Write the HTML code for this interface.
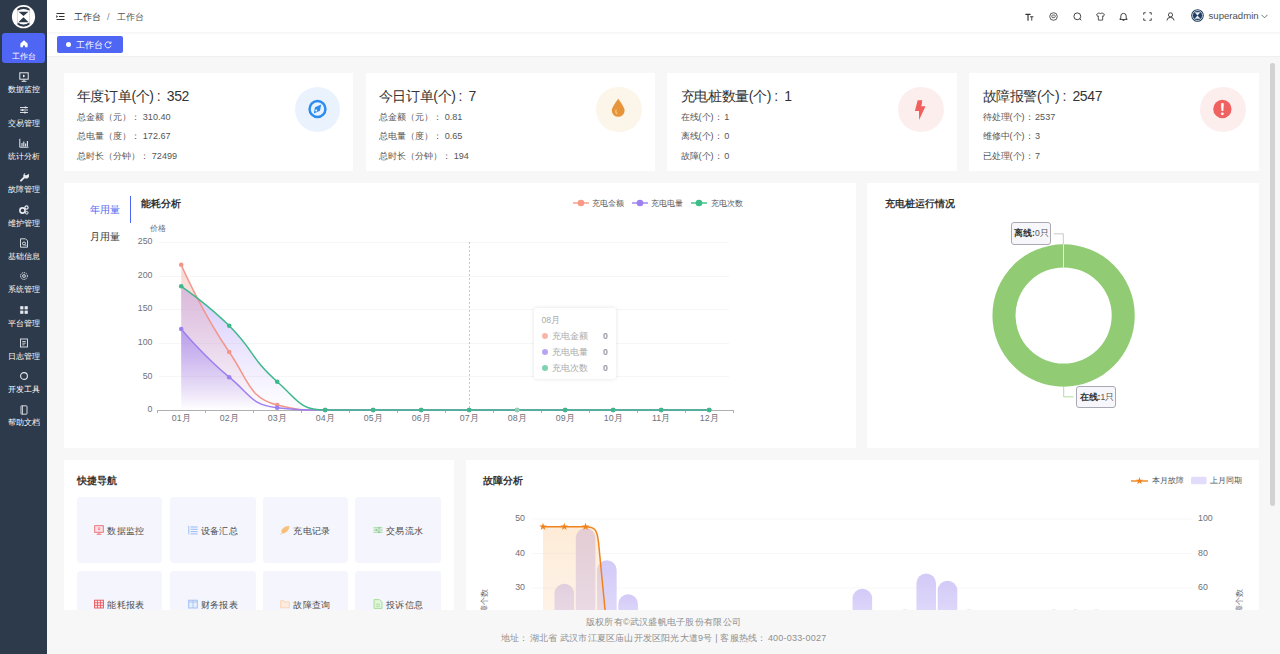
<!DOCTYPE html>
<html><head><meta charset="utf-8">
<style>
*{box-sizing:border-box}
html,body{margin:0;padding:0;width:1280px;height:654px;overflow:hidden;background:#f7f7f7;font-family:"Liberation Sans",sans-serif;color:#333}
.abs{position:absolute}
#side{position:absolute;left:0;top:0;width:47px;height:654px;background:#2d3a4b}
.mi{position:absolute;left:0;width:47px;height:30px;color:#e6e9ee;font-size:8.4px;line-height:10px}
.mi svg{position:absolute;left:18.5px;width:10px;height:10px}
.mi .tx{position:absolute;left:0;width:47px;text-align:center;white-space:nowrap}
.act{position:absolute;left:2px;top:33px;width:43px;height:30px;background:#4f66f5;border-radius:3px}
#hdr{position:absolute;left:47px;top:0;width:1233px;height:32px;background:#fff}
#tags{position:absolute;left:47px;top:33px;width:1233px;height:23px;background:#fff;border-top:1px solid #f9f9f9;box-shadow:0 1px 1px rgba(0,0,0,0.03)}
.card{position:absolute;background:#fff}
.t14{position:absolute;font-size:14px;letter-spacing:-0.35px;line-height:16px;color:#333;white-space:nowrap}
.t9{position:absolute;font-size:9.1px;line-height:10px;color:#555;white-space:nowrap}
.circ{position:absolute;width:45.4px;height:45.4px;border-radius:50%}
.circ svg{position:absolute;left:0;top:0;width:45.4px;height:45.4px}
.tile{position:absolute;width:85.6px;height:66.6px;background:#f4f5fd;border-radius:4px}
.tile .tt{position:absolute;top:28px;left:0;width:85.6px;text-align:center;font-size:9.4px;line-height:11px;color:#4a4a4a;white-space:nowrap;letter-spacing:0.3px}
.tile svg{display:inline-block;width:10px;height:10px;vertical-align:-1px;margin-right:3px}
.ttl{position:absolute;font-size:9.8px;line-height:11px;font-weight:bold;color:#333;white-space:nowrap}
.lg{position:absolute;font-size:7.6px;line-height:9px;color:#555;white-space:nowrap}
.ax{position:absolute;font-size:8.8px;line-height:10px;color:#6e7079;white-space:nowrap}
.hic{position:absolute;top:12px;width:10px;height:10px}
.ft{position:absolute;left:47px;width:1233px;text-align:center;font-size:9px;line-height:10px;color:#8f8f8f;white-space:nowrap}
</style></head><body>
<!-- sidebar -->
<div id="side">
  <svg class="abs" style="left:10px;top:3px" width="27" height="27" viewBox="0 0 27 27">
    <defs><clipPath id="lgc"><rect x="7.2" y="0" width="12.6" height="27"/></clipPath></defs>
    <circle cx="13.5" cy="13.7" r="11.6" fill="#fff"/>
    <circle cx="13.5" cy="13.7" r="8.9" fill="none" stroke="#2d3a4b" stroke-width="2.3" clip-path="url(#lgc)"/>
    <rect x="7.2" y="7.3" width="12.6" height="12.8" fill="#fff"/>
    <path d="M7.4 6.5V21M19.6 6.5V21" stroke="#b8bcc4" stroke-width="0.6"/>
    <path d="M8.6 8.8H18.4L13.5 13.1Z M13.5 14.3L18.7 19.2H8.3Z" fill="#2d3a4b"/>
  </svg>
  <div class="act"></div>
  <svg class="abs" style="left:18.5px;top:38.3px" width="10" height="10" viewBox="0 0 10 10"><path d="M5 2.2L8.6 5.4V9.3H6.1V7.4H3.9V9.3H1.4V5.4Z" fill="#fff"/></svg>
<div class="abs" style="left:0;width:47px;top:51.1px;text-align:center;font-size:8.4px;line-height:11px;color:#fff;white-space:nowrap">工作台</div>
<svg class="abs" style="left:18.5px;top:71.6px" width="10" height="10" viewBox="0 0 10 10"><rect x="0.8" y="0.8" width="8.4" height="6.4" fill="none" stroke="#e6e9ee" stroke-width="1"/><path d="M4 2.6L6.4 4L4 5.4Z" fill="#e6e9ee"/><path d="M5 7.2V9.2M2.6 9.3H7.4" stroke="#e6e9ee" stroke-width="1"/></svg>
<div class="abs" style="left:0;width:47px;top:84.4px;text-align:center;font-size:8.4px;line-height:11px;color:#fff;white-space:nowrap">数据监控</div>
<svg class="abs" style="left:18.5px;top:104.9px" width="10" height="10" viewBox="0 0 10 10"><path d="M1 2.5H9M1 5H9M1 7.5H9" stroke="#e6e9ee" stroke-width="0.9"/><circle cx="6.5" cy="2.5" r="1.1" fill="#e6e9ee"/><circle cx="3.5" cy="5" r="1.1" fill="#e6e9ee"/><circle cx="6" cy="7.5" r="1.1" fill="#e6e9ee"/></svg>
<div class="abs" style="left:0;width:47px;top:117.7px;text-align:center;font-size:8.4px;line-height:11px;color:#fff;white-space:nowrap">交易管理</div>
<svg class="abs" style="left:18.5px;top:138.2px" width="10" height="10" viewBox="0 0 10 10"><path d="M0.8 0.8V9.2H9.5" fill="none" stroke="#e6e9ee" stroke-width="1"/><path d="M3 8.5V5M4.8 8.5V3.5M6.6 8.5V5.5M8.4 8.5V3" stroke="#e6e9ee" stroke-width="1.1"/></svg>
<div class="abs" style="left:0;width:47px;top:151.0px;text-align:center;font-size:8.4px;line-height:11px;color:#fff;white-space:nowrap">统计分析</div>
<svg class="abs" style="left:18.5px;top:171.5px" width="10" height="10" viewBox="0 0 10 10"><path d="M2 8.6L6.2 4.4" stroke="#e6e9ee" stroke-width="2" stroke-linecap="round"/><path d="M9.4 1.8A2.9 2.9 0 1 1 6.4 0.9L5.6 2.6L6.8 3.6L8.4 2.8Z" fill="#e6e9ee"/></svg>
<div class="abs" style="left:0;width:47px;top:184.3px;text-align:center;font-size:8.4px;line-height:11px;color:#fff;white-space:nowrap">故障管理</div>
<svg class="abs" style="left:18.5px;top:204.8px" width="10" height="10" viewBox="0 0 10 10"><circle cx="3.5" cy="5.5" r="2.6" fill="none" stroke="#e6e9ee" stroke-width="1.6"/><circle cx="7.5" cy="2.5" r="1.6" fill="none" stroke="#e6e9ee" stroke-width="1.2"/><circle cx="7.8" cy="7.8" r="1.3" fill="none" stroke="#e6e9ee" stroke-width="1"/></svg>
<div class="abs" style="left:0;width:47px;top:217.6px;text-align:center;font-size:8.4px;line-height:11px;color:#fff;white-space:nowrap">维护管理</div>
<svg class="abs" style="left:18.5px;top:238.1px" width="10" height="10" viewBox="0 0 10 10"><path d="M1.5 0.8H6.5L8.5 2.8V9.2H1.5Z" fill="none" stroke="#e6e9ee" stroke-width="0.9"/><circle cx="5" cy="5.5" r="1.5" fill="none" stroke="#e6e9ee" stroke-width="0.9"/><path d="M6 6.6L7.6 8.2" stroke="#e6e9ee" stroke-width="0.9"/></svg>
<div class="abs" style="left:0;width:47px;top:250.9px;text-align:center;font-size:8.4px;line-height:11px;color:#fff;white-space:nowrap">基础信息</div>
<svg class="abs" style="left:18.5px;top:271.4px" width="10" height="10" viewBox="0 0 10 10"><circle cx="5" cy="5" r="3.4" fill="none" stroke="#e6e9ee" stroke-width="1" stroke-dasharray="1.4,0.8"/><circle cx="5" cy="5" r="1.4" fill="none" stroke="#e6e9ee" stroke-width="0.9"/></svg>
<div class="abs" style="left:0;width:47px;top:284.2px;text-align:center;font-size:8.4px;line-height:11px;color:#fff;white-space:nowrap">系统管理</div>
<svg class="abs" style="left:18.5px;top:304.7px" width="10" height="10" viewBox="0 0 10 10"><rect x="1.2" y="1.2" width="3.2" height="3.2" fill="#e6e9ee"/><rect x="5.6" y="1.2" width="3.2" height="3.2" fill="#e6e9ee"/><rect x="1.2" y="5.6" width="3.2" height="3.2" fill="#e6e9ee"/><rect x="5.6" y="5.6" width="3.2" height="3.2" fill="#e6e9ee"/></svg>
<div class="abs" style="left:0;width:47px;top:317.5px;text-align:center;font-size:8.4px;line-height:11px;color:#fff;white-space:nowrap">平台管理</div>
<svg class="abs" style="left:18.5px;top:338.0px" width="10" height="10" viewBox="0 0 10 10"><rect x="1.5" y="1" width="7" height="8" fill="none" stroke="#e6e9ee" stroke-width="0.9"/><path d="M3.2 3.5H6.8M3.2 5.2H6.8M3.2 6.9H5.5" stroke="#e6e9ee" stroke-width="0.8"/></svg>
<div class="abs" style="left:0;width:47px;top:350.8px;text-align:center;font-size:8.4px;line-height:11px;color:#fff;white-space:nowrap">日志管理</div>
<svg class="abs" style="left:18.5px;top:371.3px" width="10" height="10" viewBox="0 0 10 10"><circle cx="5" cy="5" r="3.4" fill="none" stroke="#e6e9ee" stroke-width="1.1"/></svg>
<div class="abs" style="left:0;width:47px;top:384.1px;text-align:center;font-size:8.4px;line-height:11px;color:#fff;white-space:nowrap">开发工具</div>
<svg class="abs" style="left:18.5px;top:404.6px" width="10" height="10" viewBox="0 0 10 10"><rect x="2" y="0.8" width="6" height="8.4" rx="0.6" fill="none" stroke="#e6e9ee" stroke-width="0.9"/><path d="M3.5 0.8V9.2" stroke="#e6e9ee" stroke-width="0.8"/></svg>
<div class="abs" style="left:0;width:47px;top:417.4px;text-align:center;font-size:8.4px;line-height:11px;color:#fff;white-space:nowrap">帮助文档</div>
</div>
<!-- header -->
<div id="hdr">
  <svg class="abs" style="left:9.3px;top:12.2px" width="9" height="9" viewBox="0 0 9 9"><path d="M0.5 1.5H8.5M3 4.5H8.5M0.5 7.5H8.5" stroke="#303133" stroke-width="1.2"/><path d="M0.3 3L2 4.5L0.3 6Z" fill="#303133"/></svg>
  <div class="abs" style="left:27px;top:11.7px;font-size:9.3px;line-height:11px;color:#303133;white-space:nowrap">工作台</div>
  <div class="abs" style="left:60px;top:11.7px;font-size:9.3px;line-height:11px;color:#888;white-space:nowrap">/</div>
  <div class="abs" style="left:70px;top:11.7px;font-size:9.3px;line-height:11px;color:#555;white-space:nowrap">工作台</div>
  <svg class="abs" style="left:978.1px;top:12.3px" width="9" height="9" viewBox="0 0 10 10"><path d="M0.5 2.6H6.2M3.35 2.6V9.6" stroke="#303133" stroke-width="1.3"/><path d="M5.6 5.3H9.4M7.5 5.3V9.6" stroke="#303133" stroke-width="1"/></svg>
<svg class="abs" style="left:1002.3px;top:12.3px" width="9" height="9" viewBox="0 0 10 10"><circle cx="5" cy="5" r="4.2" fill="none" stroke="#303133" stroke-width="0.9"/><rect x="3" y="3.4" width="4" height="2.6" rx="1" fill="none" stroke="#303133" stroke-width="0.8"/><path d="M4.2 6L4.5 7" stroke="#303133" stroke-width="0.8"/></svg>
<svg class="abs" style="left:1025.5px;top:12.3px" width="9" height="9" viewBox="0 0 10 10"><circle cx="4.8" cy="4.8" r="3.8" fill="none" stroke="#303133" stroke-width="1"/><path d="M7.5 7.5L9.3 9.3" stroke="#303133" stroke-width="1"/></svg>
<svg class="abs" style="left:1048.9px;top:12.3px" width="9" height="9" viewBox="0 0 10 10"><path d="M3.3 1L0.7 2.6L1.6 4.8L2.6 4.4V9H7.4V4.4L8.4 4.8L9.3 2.6L6.7 1Q5 2.6 3.3 1Z" fill="none" stroke="#303133" stroke-width="0.9" stroke-linejoin="round"/></svg>
<svg class="abs" style="left:1072.4px;top:12.3px" width="9" height="9" viewBox="0 0 10 10"><path d="M2 7.5V4.5A3 3 0 0 1 8 4.5V7.5H9V8.3H1V7.5Z" fill="none" stroke="#303133" stroke-width="1"/><path d="M4 9.3H6" stroke="#303133" stroke-width="1"/></svg>
<svg class="abs" style="left:1095.9px;top:12.3px" width="9" height="9" viewBox="0 0 10 10"><path d="M0.8 3V0.8H3M7 0.8H9.2V3M9.2 7V9.2H7M3 9.2H0.8V7" fill="none" stroke="#303133" stroke-width="1"/></svg>
<svg class="abs" style="left:1119.1px;top:12.3px" width="9" height="9" viewBox="0 0 10 10"><circle cx="5" cy="3.2" r="2.3" fill="none" stroke="#303133" stroke-width="1"/><path d="M1 9.4Q1.2 6 5 6Q8.8 6 9 9.4" fill="none" stroke="#303133" stroke-width="1"/></svg>
<svg class="abs" style="left:1143.8px;top:9.3px" width="13" height="13" viewBox="0 0 13 13"><circle cx="6.5" cy="6.5" r="6.3" fill="#1f3b5e"/><circle cx="6.5" cy="6.5" r="5" fill="none" stroke="#e8eef5" stroke-width="0.8"/><path d="M3.5 3.2H9.5L6.5 6.5Z M3.5 9.8H9.5L6.5 6.5Z" fill="#e8eef5"/></svg>
<div class="abs" style="left:1161.5px;top:10px;font-size:9.6px;line-height:12px;color:#505050;white-space:nowrap">superadmin</div>
<svg class="abs" style="left:1214px;top:14px" width="7" height="5" viewBox="0 0 7 5"><path d="M0.5 0.8L3.5 3.8L6.5 0.8" fill="none" stroke="#555" stroke-width="0.8"/></svg>
</div>
<div id="tags">
  <div class="abs" style="left:10px;top:2.2px;width:66px;height:17px;background:#4f66f5;border-radius:2px"></div>
  <div class="abs" style="left:19px;top:8.2px;width:5px;height:5px;border-radius:50%;background:#fff"></div>
  <div class="abs" style="left:29px;top:5.5px;font-size:8.7px;line-height:10px;color:#fff;white-space:nowrap">工作台</div>
  <svg class="abs" style="left:57px;top:6.8px" width="8" height="8" viewBox="0 0 8 8"><path d="M6.6 2.2A3 3 0 1 0 7 4.6" fill="none" stroke="#fff" stroke-width="0.9"/><path d="M5.2 2.3H7V0.6" fill="none" stroke="#fff" stroke-width="0.9"/></svg>
</div>
<div class="card" style="left:63.6px;top:72.5px;width:289.9px;height:98px"></div>
<div class="t14" style="left:76.8px;top:88px">年度订单(个)<span style="display:inline-block;margin:0 6.5px 0 3px">:</span>352</div>
<div class="t9" style="left:76.8px;top:111.5px">总金额（元）：<span style="display:inline-block;width:3px"></span>310.40</div>
<div class="t9" style="left:76.8px;top:131.0px">总电量（度）：<span style="display:inline-block;width:3px"></span>172.67</div>
<div class="t9" style="left:76.8px;top:150.5px">总时长（分钟）：<span style="display:inline-block;width:3px"></span>72499</div>
<div class="circ" style="left:294.5px;top:86.5px;background:#eaf3fd"><svg viewBox="0 0 45.4 45.4"><circle cx="22.5" cy="22" r="7.95" fill="none" stroke="#2d8cf0" stroke-width="2.5"/><path d="M26.2 17.4L25 23.8L18.8 26.6L20 20.2Z" fill="#2d8cf0"/><circle cx="21.2" cy="23.4" r="1" fill="#fff"/></svg></div>
<div class="card" style="left:365.5px;top:72.5px;width:289.9px;height:98px"></div>
<div class="t14" style="left:378.7px;top:88px">今日订单(个)<span style="display:inline-block;margin:0 6.5px 0 3px">:</span>7</div>
<div class="t9" style="left:378.7px;top:111.5px">总金额（元）：<span style="display:inline-block;width:3px"></span>0.81</div>
<div class="t9" style="left:378.7px;top:131.0px">总电量（度）：<span style="display:inline-block;width:3px"></span>0.65</div>
<div class="t9" style="left:378.7px;top:150.5px">总时长（分钟）：<span style="display:inline-block;width:3px"></span>194</div>
<div class="circ" style="left:596.4px;top:86.5px;background:#fcf5ea"><svg viewBox="0 0 45.4 45.4"><path d="M22.2 11.8Q28.6 20.5 28.6 23.4A6.4 6.4 0 0 1 15.8 23.4Q15.8 20.5 22.2 11.8Z" fill="#e6953a"/><path d="M20.2 22.5Q19 25.5 21.2 27" fill="none" stroke="#f6c27a" stroke-width="1.3"/></svg></div>
<div class="card" style="left:667.4px;top:72.5px;width:289.9px;height:98px"></div>
<div class="t14" style="left:680.6px;top:88px">充电桩数量(个)<span style="display:inline-block;margin:0 6.5px 0 3px">:</span>1</div>
<div class="t9" style="left:680.6px;top:111.5px">在线(个)：<span style="display:inline-block;width:1.5px"></span>1</div>
<div class="t9" style="left:680.6px;top:131.0px">离线(个)：<span style="display:inline-block;width:1.5px"></span>0</div>
<div class="t9" style="left:680.6px;top:150.5px">故障(个)：<span style="display:inline-block;width:1.5px"></span>0</div>
<div class="circ" style="left:898.3px;top:86.5px;background:#fdeeee"><svg viewBox="0 0 45.4 45.4"><path d="M24.3 13.3L19.7 13.3L16.9 24.1L21 24.1L21.1 33L27.5 19.3L23.4 19.3Z" fill="#f0605e"/></svg></div>
<div class="card" style="left:969.3px;top:72.5px;width:289.9px;height:98px"></div>
<div class="t14" style="left:982.5px;top:88px">故障报警(个)<span style="display:inline-block;margin:0 6.5px 0 3px">:</span>2547</div>
<div class="t9" style="left:982.5px;top:111.5px">待处理(个)：<span style="display:inline-block;width:1.5px"></span>2537</div>
<div class="t9" style="left:982.5px;top:131.0px">维修中(个)：<span style="display:inline-block;width:1.5px"></span>3</div>
<div class="t9" style="left:982.5px;top:150.5px">已处理(个)：<span style="display:inline-block;width:1.5px"></span>7</div>
<div class="circ" style="left:1200.2px;top:86.5px;background:#fdeeee"><svg viewBox="0 0 45.4 45.4"><circle cx="22.4" cy="22" r="9.2" fill="#f06262"/><path d="M21 16.2H23.8L23.3 24H21.5Z" fill="#fff"/><circle cx="22.4" cy="26.8" r="1.4" fill="#fff"/></svg></div>
<div class="card" style="left:63.6px;top:183px;width:792.4px;height:264.5px"></div>
<div class="abs" style="left:89.5px;top:204px;font-size:10px;line-height:11px;color:#4f66f5;white-space:nowrap">年用量</div>
<div class="abs" style="left:89.5px;top:230.5px;font-size:10px;line-height:11px;color:#333;white-space:nowrap">月用量</div>
<div class="abs" style="left:129.5px;top:196px;width:1.4px;height:26.5px;background:#4f66f5"></div>
<div class="ttl" style="left:140.7px;top:197.5px">能耗分析</div>
<div class="ax" style="left:149.5px;top:223.5px;font-size:7.6px">价格</div>
<div class="ax" style="left:100px;width:52.5px;text-align:right;top:404.0px">0</div>
<div class="ax" style="left:100px;width:52.5px;text-align:right;top:370.5px">50</div>
<div class="ax" style="left:100px;width:52.5px;text-align:right;top:336.9px">100</div>
<div class="ax" style="left:100px;width:52.5px;text-align:right;top:303.4px">150</div>
<div class="ax" style="left:100px;width:52.5px;text-align:right;top:269.8px">200</div>
<div class="ax" style="left:100px;width:52.5px;text-align:right;top:236.3px">250</div>
<div class="ax" style="left:161.2px;width:40px;text-align:center;top:413px">01月</div>
<div class="ax" style="left:209.2px;width:40px;text-align:center;top:413px">02月</div>
<div class="ax" style="left:257.2px;width:40px;text-align:center;top:413px">03月</div>
<div class="ax" style="left:305.2px;width:40px;text-align:center;top:413px">04月</div>
<div class="ax" style="left:353.2px;width:40px;text-align:center;top:413px">05月</div>
<div class="ax" style="left:401.2px;width:40px;text-align:center;top:413px">06月</div>
<div class="ax" style="left:449.2px;width:40px;text-align:center;top:413px">07月</div>
<div class="ax" style="left:497.2px;width:40px;text-align:center;top:413px">08月</div>
<div class="ax" style="left:545.2px;width:40px;text-align:center;top:413px">09月</div>
<div class="ax" style="left:593.2px;width:40px;text-align:center;top:413px">10月</div>
<div class="ax" style="left:641.2px;width:40px;text-align:center;top:413px">11月</div>
<div class="ax" style="left:689.2px;width:40px;text-align:center;top:413px">12月</div>
<svg class="abs" style="left:572.5px;top:199px" width="16" height="8" viewBox="0 0 16 8"><path d="M0 4H16" stroke="#f89a85" stroke-width="1.4"/><circle cx="8" cy="4" r="3.3" fill="#f89a85"/></svg>
<div class="lg" style="left:592.0px;top:198.5px">充电金额</div>
<svg class="abs" style="left:631.7px;top:199px" width="16" height="8" viewBox="0 0 16 8"><path d="M0 4H16" stroke="#9d7ff0" stroke-width="1.4"/><circle cx="8" cy="4" r="3.3" fill="#9d7ff0"/></svg>
<div class="lg" style="left:651.2px;top:198.5px">充电电量</div>
<svg class="abs" style="left:691.0px;top:199px" width="16" height="8" viewBox="0 0 16 8"><path d="M0 4H16" stroke="#3dbd87" stroke-width="1.4"/><circle cx="8" cy="4" r="3.3" fill="#3dbd87"/></svg>
<div class="lg" style="left:710.5px;top:198.5px">充电次数</div>
<svg class="abs" style="left:0;top:0" width="1280" height="654" viewBox="0 0 1280 654">
<defs>
<linearGradient id="gSal" x1="0" y1="0" x2="0" y2="1"><stop offset="0" stop-color="#eb8c80" stop-opacity="0.33"/><stop offset="1" stop-color="#eb8c80" stop-opacity="0"/></linearGradient>
<linearGradient id="gPur" x1="0" y1="0" x2="0" y2="1"><stop offset="0" stop-color="#9678f0" stop-opacity="0.55"/><stop offset="1" stop-color="#9678f0" stop-opacity="0"/></linearGradient>
<linearGradient id="gGrn" x1="0" y1="0" x2="0" y2="1"><stop offset="0" stop-color="#b4a0fa" stop-opacity="0.56"/><stop offset="1" stop-color="#b4a0fa" stop-opacity="0"/></linearGradient>
</defs>
<line x1="159" y1="376.5" x2="729" y2="376.5" stroke="#f6f6f6" stroke-width="1"/>
<line x1="159" y1="343.5" x2="729" y2="343.5" stroke="#f6f6f6" stroke-width="1"/>
<line x1="159" y1="309.5" x2="729" y2="309.5" stroke="#f6f6f6" stroke-width="1"/>
<line x1="159" y1="276.5" x2="729" y2="276.5" stroke="#f6f6f6" stroke-width="1"/>
<line x1="159" y1="242.5" x2="729" y2="242.5" stroke="#f6f6f6" stroke-width="1"/>
<path d="M181.20,286.30 C181.20,286.30 207.23,303.99 229.20,325.81 C255.23,351.68 249.87,357.73 277.20,381.69 C297.87,399.82 299.41,410.00 325.20,410.00 C347.41,410.00 349.20,410.00 373.20,410.00 C397.20,410.00 397.20,410.00 421.20,410.00 C445.20,410.00 445.20,410.00 469.20,410.00 C493.20,410.00 493.20,410.00 517.20,410.00 C541.20,410.00 541.20,410.00 565.20,410.00 C589.20,410.00 589.20,410.00 613.20,410.00 C637.20,410.00 637.20,410.00 661.20,410.00 C685.20,410.00 709.20,410.00 709.20,410.00 L709.20,410.0 L181.20,410.0 Z" fill="url(#gGrn)"/>
<path d="M181.20,264.77 C181.20,264.77 201.27,311.17 229.20,351.98 C249.27,381.30 248.53,397.68 277.20,405.04 C296.53,410.00 301.14,410.00 325.20,410.00 C349.14,410.00 349.20,410.00 373.20,410.00 C397.20,410.00 397.20,410.00 421.20,410.00 C445.20,410.00 445.20,410.00 469.20,410.00 C493.20,410.00 493.20,410.00 517.20,410.00 C541.20,410.00 541.20,410.00 565.20,410.00 C589.20,410.00 589.20,410.00 613.20,410.00 C637.20,410.00 637.20,410.00 661.20,410.00 C685.20,410.00 709.20,410.00 709.20,410.00 L709.20,410.0 L181.20,410.0 Z" fill="url(#gSal)"/>
<path d="M181.20,329.03 C181.20,329.03 203.06,355.78 229.20,377.20 C251.06,395.12 251.18,405.02 277.20,407.72 C299.18,410.00 301.19,410.00 325.20,410.00 C349.19,410.00 349.20,410.00 373.20,410.00 C397.20,410.00 397.20,410.00 421.20,410.00 C445.20,410.00 445.20,410.00 469.20,410.00 C493.20,410.00 493.20,410.00 517.20,410.00 C541.20,410.00 541.20,410.00 565.20,410.00 C589.20,410.00 589.20,410.00 613.20,410.00 C637.20,410.00 637.20,410.00 661.20,410.00 C685.20,410.00 709.20,410.00 709.20,410.00 L709.20,410.0 L181.20,410.0 Z" fill="url(#gPur)"/>
<line x1="469.5" y1="242" x2="469.5" y2="410" stroke="#c8c8c8" stroke-width="1" stroke-dasharray="2,2"/>
<line x1="157" y1="410.5" x2="733" y2="410.5" stroke="#b0b0b0" stroke-width="1"/>
<line x1="157.5" y1="410" x2="157.5" y2="413" stroke="#b0b0b0" stroke-width="1"/>
<line x1="205.5" y1="410" x2="205.5" y2="413" stroke="#b0b0b0" stroke-width="1"/>
<line x1="253.5" y1="410" x2="253.5" y2="413" stroke="#b0b0b0" stroke-width="1"/>
<line x1="301.5" y1="410" x2="301.5" y2="413" stroke="#b0b0b0" stroke-width="1"/>
<line x1="349.5" y1="410" x2="349.5" y2="413" stroke="#b0b0b0" stroke-width="1"/>
<line x1="397.5" y1="410" x2="397.5" y2="413" stroke="#b0b0b0" stroke-width="1"/>
<line x1="445.5" y1="410" x2="445.5" y2="413" stroke="#b0b0b0" stroke-width="1"/>
<line x1="493.5" y1="410" x2="493.5" y2="413" stroke="#b0b0b0" stroke-width="1"/>
<line x1="541.5" y1="410" x2="541.5" y2="413" stroke="#b0b0b0" stroke-width="1"/>
<line x1="589.5" y1="410" x2="589.5" y2="413" stroke="#b0b0b0" stroke-width="1"/>
<line x1="637.5" y1="410" x2="637.5" y2="413" stroke="#b0b0b0" stroke-width="1"/>
<line x1="685.5" y1="410" x2="685.5" y2="413" stroke="#b0b0b0" stroke-width="1"/>
<line x1="733.5" y1="410" x2="733.5" y2="413" stroke="#b0b0b0" stroke-width="1"/>
<path d="M181.20,264.77 C181.20,264.77 201.27,311.17 229.20,351.98 C249.27,381.30 248.53,397.68 277.20,405.04 C296.53,410.00 301.14,410.00 325.20,410.00 C349.14,410.00 349.20,410.00 373.20,410.00 C397.20,410.00 397.20,410.00 421.20,410.00 C445.20,410.00 445.20,410.00 469.20,410.00 C493.20,410.00 493.20,410.00 517.20,410.00 C541.20,410.00 541.20,410.00 565.20,410.00 C589.20,410.00 589.20,410.00 613.20,410.00 C637.20,410.00 637.20,410.00 661.20,410.00 C685.20,410.00 709.20,410.00 709.20,410.00" fill="none" stroke="#f3968a" stroke-width="1.5"/>
<path d="M181.20,329.03 C181.20,329.03 203.06,355.78 229.20,377.20 C251.06,395.12 251.18,405.02 277.20,407.72 C299.18,410.00 301.19,410.00 325.20,410.00 C349.19,410.00 349.20,410.00 373.20,410.00 C397.20,410.00 397.20,410.00 421.20,410.00 C445.20,410.00 445.20,410.00 469.20,410.00 C493.20,410.00 493.20,410.00 517.20,410.00 C541.20,410.00 541.20,410.00 565.20,410.00 C589.20,410.00 589.20,410.00 613.20,410.00 C637.20,410.00 637.20,410.00 661.20,410.00 C685.20,410.00 709.20,410.00 709.20,410.00" fill="none" stroke="#9b80f0" stroke-width="1.5"/>
<path d="M181.20,286.30 C181.20,286.30 207.23,303.99 229.20,325.81 C255.23,351.68 249.87,357.73 277.20,381.69 C297.87,399.82 299.41,410.00 325.20,410.00 C347.41,410.00 349.20,410.00 373.20,410.00 C397.20,410.00 397.20,410.00 421.20,410.00 C445.20,410.00 445.20,410.00 469.20,410.00 C493.20,410.00 493.20,410.00 517.20,410.00 C541.20,410.00 541.20,410.00 565.20,410.00 C589.20,410.00 589.20,410.00 613.20,410.00 C637.20,410.00 637.20,410.00 661.20,410.00 C685.20,410.00 709.20,410.00 709.20,410.00" fill="none" stroke="#3cb98a" stroke-width="1.5"/>
<circle cx="181.20" cy="264.77" r="2.3" fill="#f3968a"/>
<circle cx="229.20" cy="351.98" r="2.3" fill="#f3968a"/>
<circle cx="277.20" cy="405.04" r="2.3" fill="#f3968a"/>
<circle cx="325.20" cy="410.00" r="2.3" fill="#f3968a"/>
<circle cx="373.20" cy="410.00" r="2.3" fill="#f3968a"/>
<circle cx="421.20" cy="410.00" r="2.3" fill="#f3968a"/>
<circle cx="469.20" cy="410.00" r="2.3" fill="#f3968a"/>
<circle cx="517.20" cy="410.00" r="2.3" fill="#f3968a"/>
<circle cx="565.20" cy="410.00" r="2.3" fill="#f3968a"/>
<circle cx="613.20" cy="410.00" r="2.3" fill="#f3968a"/>
<circle cx="661.20" cy="410.00" r="2.3" fill="#f3968a"/>
<circle cx="709.20" cy="410.00" r="2.3" fill="#f3968a"/>
<circle cx="181.20" cy="329.03" r="2.3" fill="#9b80f0"/>
<circle cx="229.20" cy="377.20" r="2.3" fill="#9b80f0"/>
<circle cx="277.20" cy="407.72" r="2.3" fill="#9b80f0"/>
<circle cx="325.20" cy="410.00" r="2.3" fill="#9b80f0"/>
<circle cx="373.20" cy="410.00" r="2.3" fill="#9b80f0"/>
<circle cx="421.20" cy="410.00" r="2.3" fill="#9b80f0"/>
<circle cx="469.20" cy="410.00" r="2.3" fill="#9b80f0"/>
<circle cx="517.20" cy="410.00" r="2.3" fill="#9b80f0"/>
<circle cx="565.20" cy="410.00" r="2.3" fill="#9b80f0"/>
<circle cx="613.20" cy="410.00" r="2.3" fill="#9b80f0"/>
<circle cx="661.20" cy="410.00" r="2.3" fill="#9b80f0"/>
<circle cx="709.20" cy="410.00" r="2.3" fill="#9b80f0"/>
<circle cx="181.20" cy="286.30" r="2.3" fill="#3cb98a"/>
<circle cx="229.20" cy="325.81" r="2.3" fill="#3cb98a"/>
<circle cx="277.20" cy="381.69" r="2.3" fill="#3cb98a"/>
<circle cx="325.20" cy="410.00" r="2.3" fill="#3cb98a"/>
<circle cx="373.20" cy="410.00" r="2.3" fill="#3cb98a"/>
<circle cx="421.20" cy="410.00" r="2.3" fill="#3cb98a"/>
<circle cx="469.20" cy="410.00" r="2.3" fill="#3cb98a"/>
<circle cx="517.20" cy="410.00" r="2.3" fill="#8fd3b5"/>
<circle cx="565.20" cy="410.00" r="2.3" fill="#3cb98a"/>
<circle cx="613.20" cy="410.00" r="2.3" fill="#3cb98a"/>
<circle cx="661.20" cy="410.00" r="2.3" fill="#3cb98a"/>
<circle cx="709.20" cy="410.00" r="2.3" fill="#3cb98a"/>
</svg>
<div class="abs" style="left:534.3px;top:308px;width:81.5px;height:71px;background:rgba(255,255,255,0.9);border-radius:3px;box-shadow:0 0 4px rgba(0,0,0,0.12)"></div>
<div class="abs" style="left:541.4px;top:315px;font-size:8.7px;line-height:10px;color:#aaa;white-space:nowrap">08月</div>
<div class="abs" style="left:541.6px;top:333.3px;width:6px;height:6px;border-radius:50%;background:#f9b7a9"></div>
<div class="abs" style="left:552px;top:330.8px;font-size:8.7px;line-height:11px;color:#aaa;white-space:nowrap">充电金额</div>
<div class="abs" style="left:603px;top:330.8px;font-size:8.7px;line-height:11px;color:#999;font-weight:bold;white-space:nowrap">0</div>
<div class="abs" style="left:541.6px;top:349.3px;width:6px;height:6px;border-radius:50%;background:#b8a5f2"></div>
<div class="abs" style="left:552px;top:346.8px;font-size:8.7px;line-height:11px;color:#aaa;white-space:nowrap">充电电量</div>
<div class="abs" style="left:603px;top:346.8px;font-size:8.7px;line-height:11px;color:#999;font-weight:bold;white-space:nowrap">0</div>
<div class="abs" style="left:541.6px;top:365.3px;width:6px;height:6px;border-radius:50%;background:#7fd3b0"></div>
<div class="abs" style="left:552px;top:362.8px;font-size:8.7px;line-height:11px;color:#aaa;white-space:nowrap">充电次数</div>
<div class="abs" style="left:603px;top:362.8px;font-size:8.7px;line-height:11px;color:#999;font-weight:bold;white-space:nowrap">0</div>
<div class="card" style="left:867.4px;top:183px;width:391.4px;height:264.5px"></div>
<div class="ttl" style="left:884.8px;top:197.5px">充电桩运行情况</div>
<svg class="abs" style="left:0;top:0" width="1280" height="654" viewBox="0 0 1280 654">
<path d="M1063.6 244.3 A71.2 71.2 0 0 1 1063.6 386.7 A71.2 71.2 0 0 1 1063.6 244.3 Z M1063.6 267.4 A48.1 48.1 0 0 0 1063.6 363.6 A48.1 48.1 0 0 0 1063.6 267.4 Z" fill="#91cc75" fill-rule="evenodd"/>
<path d="M1053.7 233.8H1063.3V244.3" fill="none" stroke="#bbb" stroke-width="0.8"/>
<path d="M1063.5 244.3V267.4" stroke="#e4f2dc" stroke-width="1"/>
<path d="M1063.7 387V396.8H1073.6" fill="none" stroke="#9fd286" stroke-width="0.8"/>
</svg>
<div class="abs" style="left:1011.2px;top:222.3px;width:39.4px;height:23px;border:1px solid #a9a9b3;border-radius:3px;background:#f6f6fb"></div>
<div class="abs" style="left:1014px;top:228px;font-size:8.6px;line-height:11px;color:#333;white-space:nowrap"><b>离线:</b><span style="color:#555">0只</span></div>
<div class="abs" style="left:1076.3px;top:386px;width:40.1px;height:22.2px;border:1px solid #a9a9b3;border-radius:3px;background:#f6f6fb"></div>
<div class="abs" style="left:1079.5px;top:391.5px;font-size:8.6px;line-height:11px;color:#333;white-space:nowrap"><b>在线:</b><span style="color:#555">1只</span></div>
<div class="card" style="left:63.6px;top:460.3px;width:390.6px;height:200px"></div>
<div class="ttl" style="left:77px;top:474.5px">快捷导航</div>
<div class="tile" style="left:76.6px;top:496.7px"><div class="tt"><svg viewBox="0 0 10 10"><rect x="0.7" y="0.7" width="8.6" height="6.6" fill="#fbdfe2" stroke="#ea6b73" stroke-width="0.9"/><path d="M5 2V4.8M3.9 3.8L5 4.9L6.1 3.8" fill="none" stroke="#ea6b73" stroke-width="0.8"/><path d="M5 7.3V9M2.6 9.3H7.4" stroke="#ea6b73" stroke-width="0.9"/></svg>数据监控</div></div>
<div class="tile" style="left:170.0px;top:496.7px"><div class="tt"><svg viewBox="0 0 10 10"><path d="M0.8 0.8V9.4" stroke="#8db4f2" stroke-width="0.8"/><path d="M2.6 2H9.6M2.6 4.3H9.6M2.6 6.6H9.6M2.6 8.9H9.6" stroke="#8db4f2" stroke-width="0.9"/></svg>设备汇总</div></div>
<div class="tile" style="left:262.8px;top:496.7px"><div class="tt"><svg viewBox="0 0 10 10"><path d="M9.6 1Q3.5 0.8 1.4 5.5Q1 8 3.6 8.6Q8.6 7.2 9.6 1Z" fill="#f6c27e"/><path d="M0.6 9.6L5.5 4.5" stroke="#f2b060" stroke-width="0.7"/></svg>充电记录</div></div>
<div class="tile" style="left:355.3px;top:496.7px"><div class="tt"><svg viewBox="0 0 10 10"><path d="M0.5 2.8H9.5M0.5 5H9.5M0.5 7.2H9.5" stroke="#8fd18f" stroke-width="0.9"/><circle cx="6.2" cy="2.8" r="1.1" fill="#8fd18f"/><circle cx="3.6" cy="5" r="1.1" fill="#8fd18f"/><circle cx="6" cy="7.2" r="1.1" fill="#8fd18f"/></svg>交易流水</div></div>
<div class="tile" style="left:76.6px;top:571.2px"><div class="tt"><svg viewBox="0 0 10 10"><rect x="0.6" y="1.2" width="8.8" height="7.8" fill="#fde3e5" stroke="#e4505c" stroke-width="0.9"/><path d="M0.6 3.8H9.4M0.6 6.4H9.4M3.5 1.2V9M6.5 1.2V9" stroke="#e4505c" stroke-width="0.8"/></svg>能耗报表</div></div>
<div class="tile" style="left:170.0px;top:571.2px"><div class="tt"><svg viewBox="0 0 10 10"><rect x="0.7" y="1.2" width="8.6" height="7.8" fill="#e6effc" stroke="#9cbcf0" stroke-width="0.9"/><path d="M5 1.2V9M0.7 3H9.3" stroke="#9cbcf0" stroke-width="0.8"/></svg>财务报表</div></div>
<div class="tile" style="left:262.8px;top:571.2px"><div class="tt"><svg viewBox="0 0 10 10"><path d="M0.6 1.8H4L5 3H9.4V8.8H0.6Z" fill="#fdebdd" stroke="#f8d2b4" stroke-width="0.9"/></svg>故障查询</div></div>
<div class="tile" style="left:355.3px;top:571.2px"><div class="tt"><svg viewBox="0 0 10 10"><path d="M1 0.6H6.5L9 3.1V9.4H1Z" fill="#e3f5dc" stroke="#9edb8e" stroke-width="0.9"/><path d="M2.8 5.2H7M2.8 7.2H7" stroke="#9edb8e" stroke-width="0.8"/></svg>投诉信息</div></div>
<div class="card" style="left:466px;top:460.3px;width:792.8px;height:200px"></div>
<div class="ttl" style="left:483px;top:474.9px">故障分析</div>
<div class="ax" style="left:480px;width:45px;text-align:right;top:513.2px">50</div>
<div class="ax" style="left:480px;width:45px;text-align:right;top:547.8px">40</div>
<div class="ax" style="left:480px;width:45px;text-align:right;top:582.2px">30</div>
<div class="ax" style="left:1198px;top:513.2px">100</div>
<div class="ax" style="left:1198px;top:547.5px">80</div>
<div class="ax" style="left:1198px;top:581.8px">60</div>
<svg class="abs" style="left:0;top:0" width="1280" height="654" viewBox="0 0 1280 654">
<defs>
<linearGradient id="gOr" x1="0" y1="0" x2="0" y2="1"><stop offset="0" stop-color="#fbcf9f" stop-opacity="0.42"/><stop offset="1" stop-color="#fcdcbb" stop-opacity="0.32"/></linearGradient>
<linearGradient id="gBar" x1="0" y1="0" x2="0" y2="1"><stop offset="0" stop-color="#cbc1f6"/><stop offset="1" stop-color="#dcd5fa"/></linearGradient>
<clipPath id="clipF"><rect x="466" y="460" width="793" height="150"/></clipPath>
</defs>
<g clip-path="url(#clipF)">
<line x1="532" y1="519" x2="1192" y2="519" stroke="#f7f7f7" stroke-width="1"/>
<line x1="532" y1="553.5" x2="1192" y2="553.5" stroke="#f7f7f7" stroke-width="1"/>
<line x1="532" y1="588" x2="1192" y2="588" stroke="#f7f7f7" stroke-width="1"/>
<path d="M554.49 620V593.30A9.80 9.80 0 0 1 574.08 593.30V620Z" fill="url(#gBar)" fill-opacity="0.85"/>
<path d="M575.78 620V537.80A9.80 9.80 0 0 1 595.38 537.80V620Z" fill="url(#gBar)" fill-opacity="0.85"/>
<path d="M597.07 620V569.80A9.80 9.80 0 0 1 616.66 569.80V620Z" fill="url(#gBar)" fill-opacity="0.85"/>
<path d="M618.36 620V603.80A9.80 9.80 0 0 1 637.95 603.80V620Z" fill="url(#gBar)" fill-opacity="0.85"/>
<path d="M852.55 620V598.20A9.80 9.80 0 0 1 872.14 598.20V620Z" fill="url(#gBar)" fill-opacity="0.85"/>
<path d="M895.12 620V619.40A9.80 9.80 0 0 1 914.72 619.40V620Z" fill="url(#gBar)" fill-opacity="0.85"/>
<path d="M916.42 620V583.10A9.80 9.80 0 0 1 936.01 583.10V620Z" fill="url(#gBar)" fill-opacity="0.85"/>
<path d="M937.71 620V590.20A9.80 9.80 0 0 1 957.30 590.20V620Z" fill="url(#gBar)" fill-opacity="0.85"/>
<path d="M959.00 620V619.40A9.80 9.80 0 0 1 978.60 619.40V620Z" fill="url(#gBar)" fill-opacity="0.85"/>
<path d="M980.29 620V619.40A9.80 9.80 0 0 1 999.88 619.40V620Z" fill="url(#gBar)" fill-opacity="0.85"/>
<path d="M1001.58 620V619.40A9.80 9.80 0 0 1 1021.17 619.40V620Z" fill="url(#gBar)" fill-opacity="0.85"/>
<path d="M1022.87 620V619.40A9.80 9.80 0 0 1 1042.46 619.40V620Z" fill="url(#gBar)" fill-opacity="0.85"/>
<path d="M1044.15 620V619.40A9.80 9.80 0 0 1 1063.75 619.40V620Z" fill="url(#gBar)" fill-opacity="0.85"/>
<path d="M1065.44 620V619.40A9.80 9.80 0 0 1 1085.04 619.40V620Z" fill="url(#gBar)" fill-opacity="0.85"/>
<path d="M1086.73 620V619.40A9.80 9.80 0 0 1 1106.33 619.40V620Z" fill="url(#gBar)" fill-opacity="0.85"/>
<path d="M1108.03 620V619.40A9.80 9.80 0 0 1 1127.62 619.40V620Z" fill="url(#gBar)" fill-opacity="0.85"/>
<path d="M1129.32 620V619.40A9.80 9.80 0 0 1 1148.91 619.40V620Z" fill="url(#gBar)" fill-opacity="0.85"/>
<path d="M543.00,526.7 L585.58,526.7 C596,526.7 597.2,531 598.6,543 C600.5,562 603,588 606.5,625 L543.00,625Z" fill="url(#gOr)"/>
<path d="M543.00,526.7 L585.58,526.7 C596,526.7 597.2,531 598.6,543 C600.5,562 603,588 606.5,625" fill="none" stroke="#f0831e" stroke-width="1.5"/>
<path d="M543.00,522.70 L543.94,525.41 L546.80,525.46 L544.52,527.19 L545.35,529.94 L543.00,528.30 L540.64,529.94 L541.47,527.19 L539.19,525.46 L542.05,525.41Z" fill="#f0831e"/>
<path d="M564.28,522.70 L565.23,525.41 L568.09,525.46 L565.81,527.19 L566.64,529.94 L564.28,528.30 L561.93,529.94 L562.76,527.19 L560.48,525.46 L563.34,525.41Z" fill="#f0831e"/>
<path d="M585.58,522.70 L586.52,525.41 L589.38,525.46 L587.10,527.19 L587.93,529.94 L585.58,528.30 L583.22,529.94 L584.05,527.19 L581.77,525.46 L584.63,525.41Z" fill="#f0831e"/>
</g>
<path d="M1131 481H1148" stroke="#f0831e" stroke-width="1.4"/><path d="M1139.50,477.10 L1140.38,479.79 L1143.21,479.79 L1140.93,481.46 L1141.79,484.16 L1139.50,482.50 L1137.21,484.16 L1138.07,481.46 L1135.79,479.79 L1138.62,479.79Z" fill="#f0831e"/>
<rect x="1191" y="476.8" width="15.6" height="7.5" rx="1.5" fill="#e2dcfa"/>
</svg>
<div class="lg" style="left:1152px;top:476px;font-size:8px">本月故障</div>
<div class="lg" style="left:1210px;top:476px;font-size:8px">上月同期</div>
<div class="abs" style="left:479.7px;top:620.5px;width:32px;font-size:8px;line-height:9px;color:#6e7079;white-space:nowrap;transform-origin:0 0;transform:rotate(-90deg)">故障个数</div>
<div class="abs" style="left:1234.5px;top:620.5px;width:32px;font-size:8px;line-height:9px;color:#6e7079;white-space:nowrap;transform-origin:0 0;transform:rotate(-90deg)">故障个数</div>
<!-- footer -->
<div class="abs" style="left:47px;top:610px;width:1233px;height:44px;background:#f7f7f7"></div>
<div class="ft" style="top:616.5px;letter-spacing:0.27px">版权所有©武汉盛帆电子股份有限公司</div>
<div class="ft" style="top:632.8px;letter-spacing:0.2px">地址：<span style="display:inline-block;width:1.5px"></span>湖北省 武汉市江夏区庙山开发区阳光大道9号 | 客服热线：<span style="display:inline-block;width:1.5px"></span>400-033-0027</div>
<!-- scrollbar -->
<div class="abs" style="left:1270px;top:62.5px;width:4.5px;height:443.5px;background:#d2d2d2;border-radius:2.25px"></div>
</body></html>
